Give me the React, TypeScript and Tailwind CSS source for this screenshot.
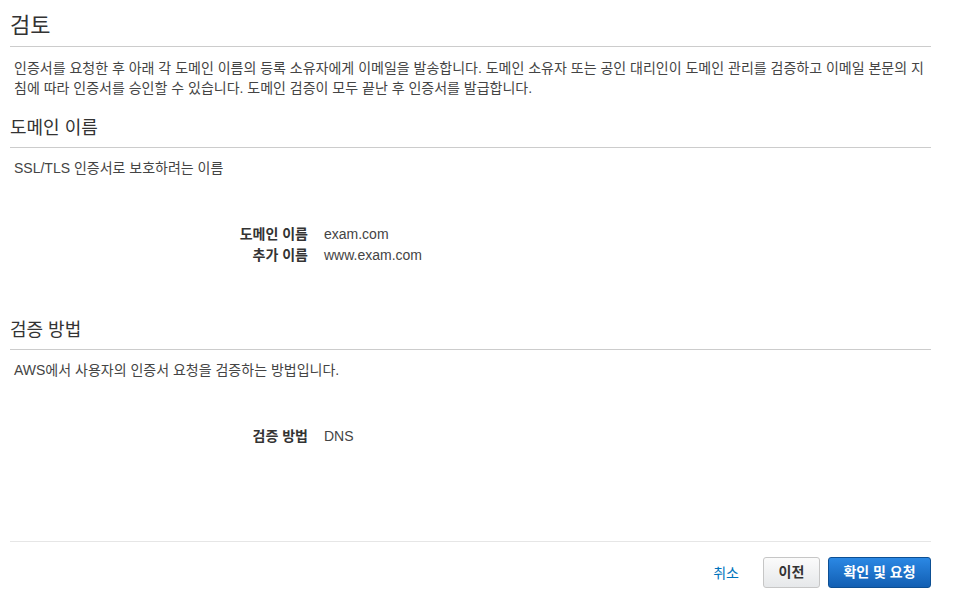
export default function App() {
  return (
    <div className="min-h-screen bg-white pl-[10px] pr-[25px] font-['Liberation_Sans','Noto_Sans_CJK_KR',sans-serif] text-[14px] text-[#444] [font-feature-settings:'palt']">
      <h1 className="pt-[12px] pb-[6px] border-b border-[#cccccc] text-[22px] leading-[28px] text-[#333]">검토</h1>
      <p className="mt-[11px] px-[4px] leading-[20px]">
        인증서를 요청한 후 아래 각 도메인 이름의 등록 소유자에게 이메일을 발송합니다. 도메인 소유자 또는 공인 대리인이 도메인 관리를 검증하고 이메일 본문의 지침에 따라 인증서를 승인할 수 있습니다. 도메인 검증이 모두 끝난 후 인증서를 발급합니다.
      </p>

      <h2 className="mt-[18px] pb-[7px] border-b border-[#cccccc] text-[18px] leading-[24px] text-[#333]">도메인 이름</h2>
      <p className="mt-[10px] px-[4px] leading-[20px]">SSL/TLS 인증서로 보호하려는 이름</p>
      <dl className="mt-[46px] grid grid-cols-[298px_1fr] gap-x-4 leading-[21px]">
        <dt className="text-right font-bold text-[#333]">도메인 이름</dt>
        <dd>exam.com</dd>
        <dt className="text-right font-bold text-[#333]">추가 이름</dt>
        <dd>www.exam.com</dd>
      </dl>

      <h2 className="mt-[52px] pb-[7px] border-b border-[#cccccc] text-[18px] leading-[24px] text-[#333]">검증 방법</h2>
      <p className="mt-[10px] px-[4px] leading-[20px]">AWS에서 사용자의 인증서 요청을 검증하는 방법입니다.</p>
      <dl className="mt-[46px] grid grid-cols-[298px_1fr] gap-x-4 leading-[21px]">
        <dt className="text-right font-bold text-[#333]">검증 방법</dt>
        <dd>DNS</dd>
      </dl>

      <div className="mt-[94px] border-t border-[#e6e6e6] pt-[15px] flex items-center justify-end">
        <a href="#" className="mr-[24px] text-[#0073bb] leading-[20px]">취소</a>
        <button className="w-[57px] h-[31px] rounded-[3px] border border-[#c6c6c6] bg-gradient-to-b from-[#fbfbfb] to-[#e6e8ea] font-bold text-[#333] text-[14px]">이전</button>
        <button className="ml-[8px] w-[103px] h-[31px] rounded-[3px] border border-[#0d4f93] bg-gradient-to-b from-[#2b88e4] to-[#125fb3] font-bold text-white text-[14px]">확인 및 요청</button>
      </div>
    </div>
  );
}
